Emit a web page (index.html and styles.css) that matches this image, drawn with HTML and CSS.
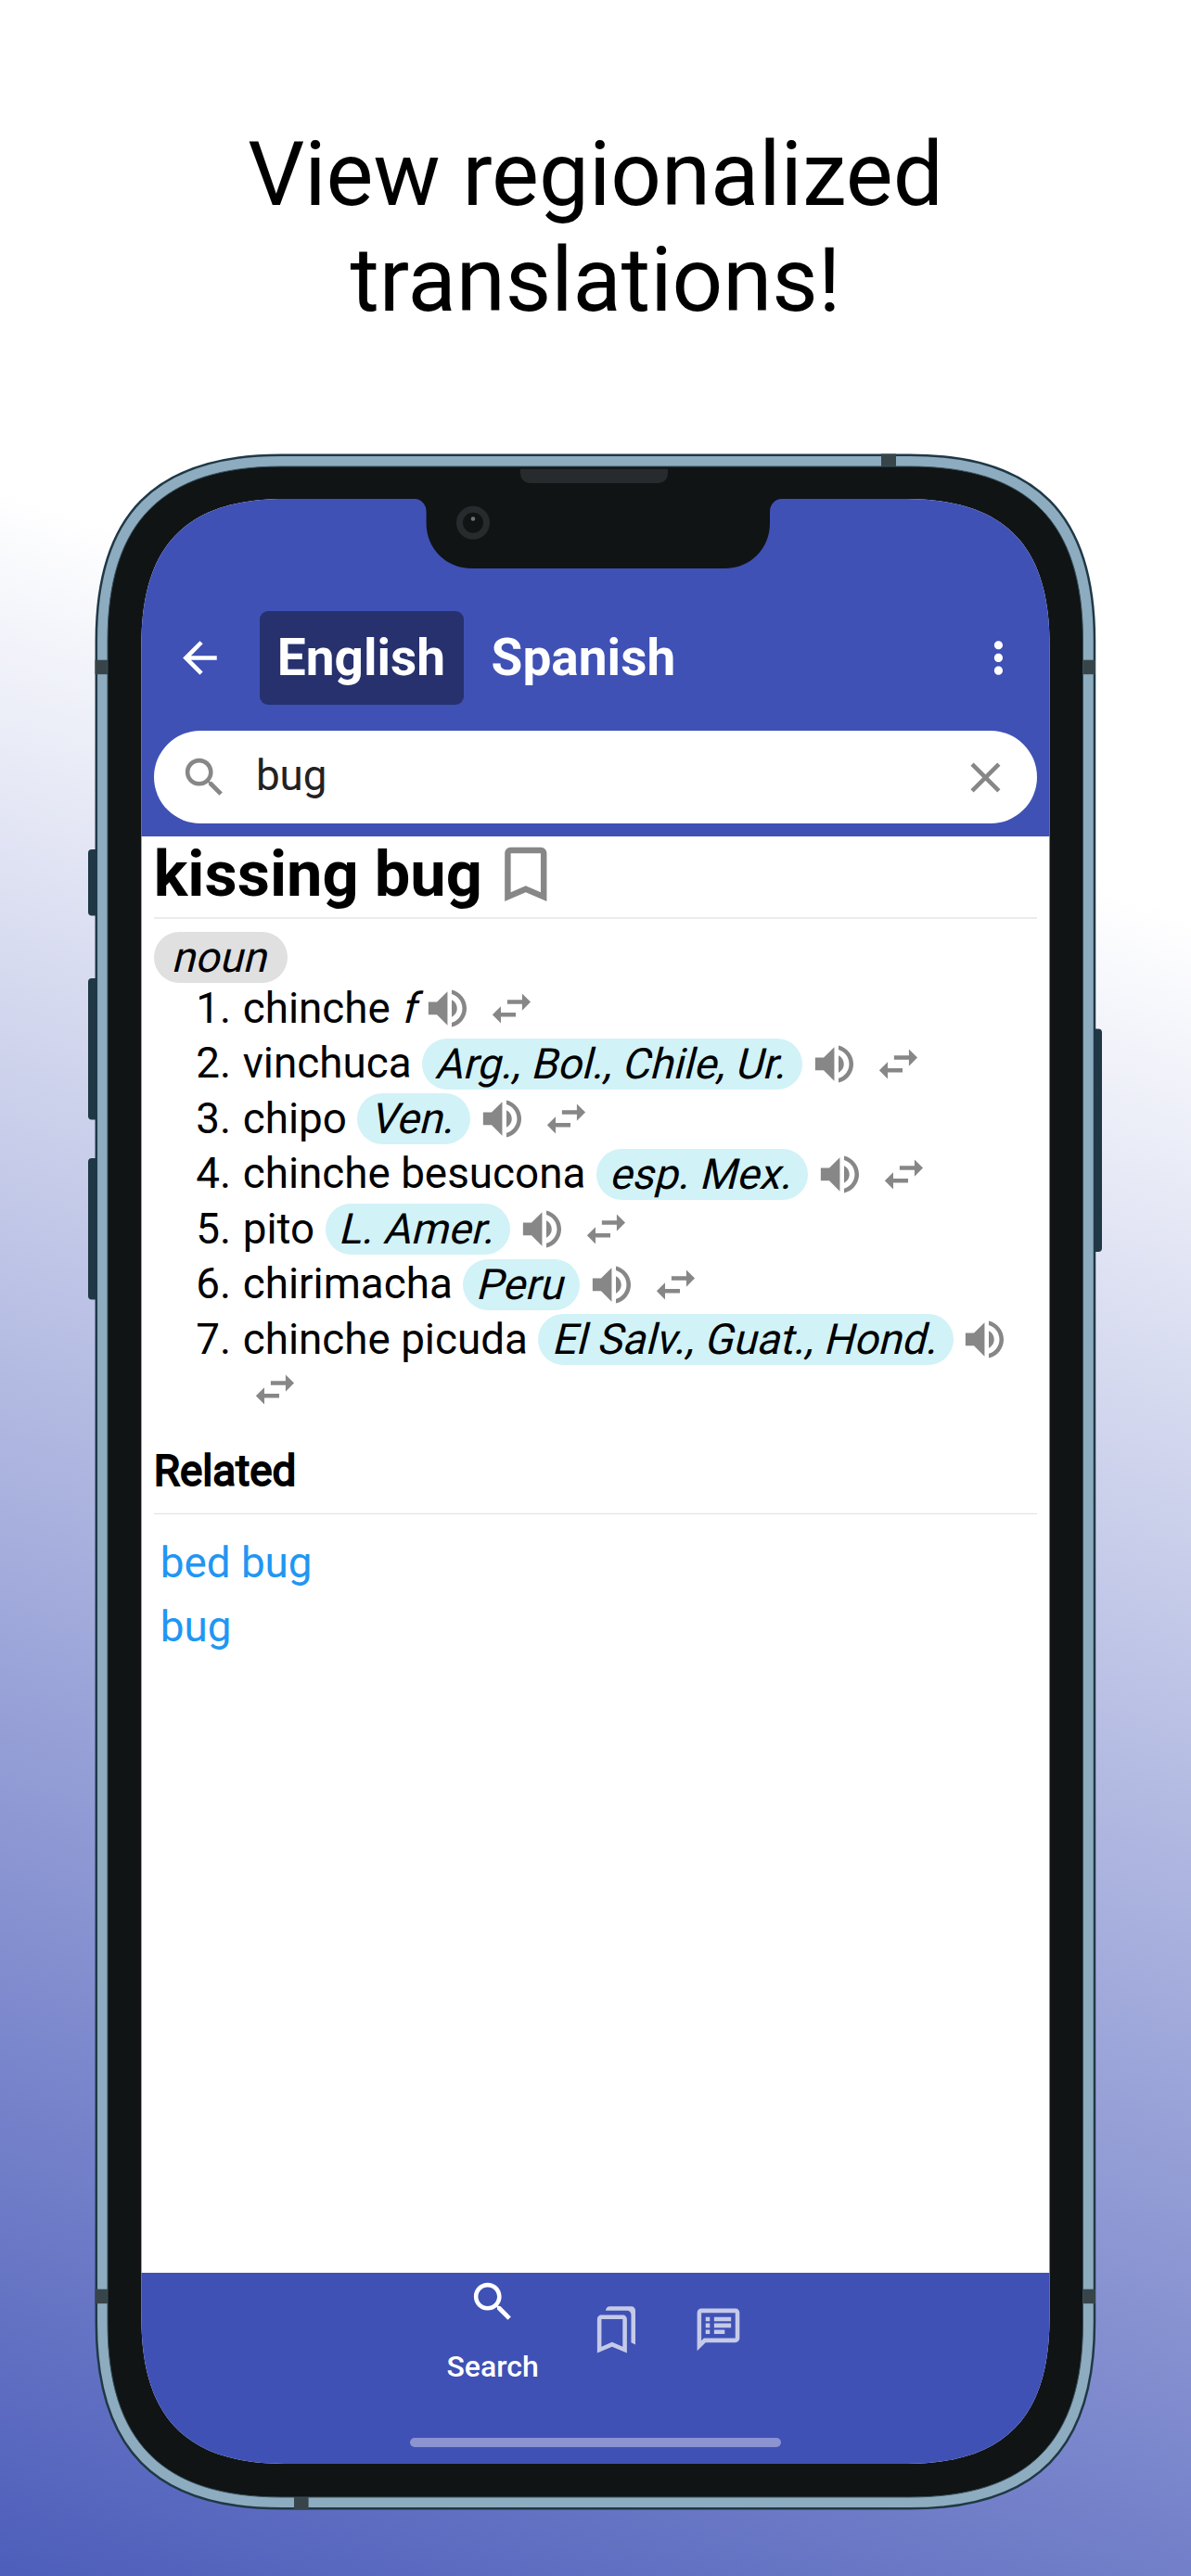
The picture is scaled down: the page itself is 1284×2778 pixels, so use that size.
FILE: index.html
```html
<!DOCTYPE html>
<html lang="en">
<head>
<meta charset="utf-8">
<title>Dictionary</title>
<link rel="stylesheet" href="styles.css">
</head>
<body>
<svg class="defs" width="0" height="0" aria-hidden="true">
  <symbol id="volume" viewBox="0 0 24 24"><path d="M3 9v6h4l5 5V4L7 9H3zm13.500 3c0-1.770-1.020-3.290-2.500-4.030v8.050c1.480-.73 2.500-2.250 2.500-4.020zM14 3.230v2.060c2.890.86 5 3.540 5 6.710s-2.110 5.850-5 6.710v2.060c4.010-.91 7-4.490 7-8.770s-2.990-7.860-7-8.770z"/></symbol>
  <symbol id="swap" viewBox="0 0 24 24"><path d="M6.990 11L3 15l3.990 4v-3H14v-2H6.990v-3zM21 9l-3.990-4v3H10v2h7.010v3L21 9z"/></symbol>
  <symbol id="search" viewBox="0 0 24 24"><path d="M15.500 14h-.79l-.28-.27C15.410 12.590 16 11.110 16 9.500 16 5.910 13.090 3 9.500 3S3 5.910 3 9.500 5.910 16 9.500 16c1.610 0 3.090-.59 4.230-1.570l.27.28v.79l5 4.990L20.490 19l-4.990-5zm-6 0C7.010 14 5 11.990 5 9.500S7.010 5 9.500 5 14 7.010 14 9.500 11.990 14 9.500 14z"/></symbol>
</svg>
<main class="page">
  <h1 class="headline">View regionalized<br>translations!</h1>
  <div class="phone">
    <svg class="frame" viewBox="95 480 1094 2236" aria-hidden="true">
      <g fill="#203845">
        <rect x="95" y="916" width="14" height="71.500" rx="4"/>
        <rect x="95" y="1055" width="14" height="152.500" rx="4"/>
        <rect x="95" y="1249" width="14" height="152.500" rx="4"/>
        <rect x="1174" y="1109.500" width="14" height="240.500" rx="4"/>
      </g>
      <path fill="#8eacc0" stroke="#203845" stroke-width="2.500" d="M303.500 490.700H980.500C1118 490.700 1180 556 1180 691V2505C1180 2640 1118 2705.300 980.500 2705.300H303.500C166 2705.300 103.800 2640 103.800 2505V691C103.800 556 166 490.700 303.500 490.700Z"/>
      <g fill="#37454b">
        <rect x="102.500" y="711.700" width="14" height="15.500"/>
        <rect x="1167" y="711.700" width="14" height="15.500"/>
        <rect x="102.500" y="2468.700" width="14" height="15.500"/>
        <rect x="1167" y="2468.700" width="14" height="15.500"/>
        <rect x="950" y="489.500" width="16" height="14"/>
        <rect x="317" y="2693" width="15.600" height="13.500"/>
      </g>
      <path fill="#101415" stroke="#37505c" stroke-width="1" d="M303.500 503H980.500C1109 503 1167.500 563 1167.500 691V2505C1167.500 2633 1109 2693 980.500 2693H303.500C175 2693 116 2633 116 2505V691C116 563 175 503 303.500 503Z"/>
      <path fill="#272b2d" d="M561 505.700H720V511a10 10 0 0 1-10 10H571a10 10 0 0 1-10-10Z"/>
    </svg>
    <div class="screen">
      <header class="appbar">
        <div class="toolbar">
          <svg class="icon back" viewBox="0 0 24 24"><path d="M20 11H7.830l5.590-5.590L12 4l-8 8 8 8 1.410-1.410L7.830 13H20v-2z"/></svg>
          <div class="tab active">English</div>
          <div class="tab">Spanish</div>
          <svg class="icon more" viewBox="0 0 24 24"><path d="M12 8c1.100 0 2-.9 2-2s-.9-2-2-2-2 .9-2 2 .9 2 2 2zm0 2c-1.100 0-2 .9-2 2s.9 2 2 2 2-.9 2-2-.9-2-2-2zm0 6c-1.100 0-2 .9-2 2s.9 2 2 2 2-.9 2-2-.9-2-2-2z"/></svg>
        </div>
        <div class="searchbox">
          <svg class="icon"><use href="#search"/></svg>
          <span class="query">bug</span>
          <svg class="icon" viewBox="0 0 24 24"><path d="M19 6.410L17.590 5 12 10.590 6.410 5 5 6.410 10.590 12 5 17.590 6.410 19 12 13.410 17.590 19 19 17.590 13.410 12z"/></svg>
        </div>
      </header>
      <section class="content">
        <div class="title">
          <h2>kissing bug</h2>
          <svg class="bookmark" viewBox="0 0 24 24"><path d="M17 3H7c-1.100 0-1.990.9-1.990 2L5 21l7-3 7 3V5c0-1.100-.9-2-2-2zm0 15l-5-2.180L7 18V5h10v13z"/></svg>
        </div>
        <div class="pos"><span class="pill grey"><span class="slant">noun</span></span></div>
        <ol class="senses">
          <li><span class="num">1.</span><span class="word">chinche <span class="slant gender">f</span></span><svg class="icon first"><use href="#volume"/></svg><svg class="icon swap"><use href="#swap"/></svg></li>
          <li><span class="num">2.</span><span class="word">vinchuca</span><span class="pill"><span class="slant">Arg., Bol., Chile, Ur.</span></span><svg class="icon"><use href="#volume"/></svg><svg class="icon swap"><use href="#swap"/></svg></li>
          <li><span class="num">3.</span><span class="word">chipo</span><span class="pill"><span class="slant">Ven.</span></span><svg class="icon"><use href="#volume"/></svg><svg class="icon swap"><use href="#swap"/></svg></li>
          <li><span class="num">4.</span><span class="word">chinche besucona</span><span class="pill"><span class="slant">esp. Mex.</span></span><svg class="icon"><use href="#volume"/></svg><svg class="icon swap"><use href="#swap"/></svg></li>
          <li><span class="num">5.</span><span class="word">pito</span><span class="pill"><span class="slant">L. Amer.</span></span><svg class="icon"><use href="#volume"/></svg><svg class="icon swap"><use href="#swap"/></svg></li>
          <li><span class="num">6.</span><span class="word">chirimacha</span><span class="pill"><span class="slant">Peru</span></span><svg class="icon"><use href="#volume"/></svg><svg class="icon swap"><use href="#swap"/></svg></li>
          <li><span class="num">7.</span><span class="word">chinche picuda</span><span class="pill"><span class="slant">El Salv., Guat., Hond.</span></span><svg class="icon"><use href="#volume"/></svg></li>
          <li class="wrapped"><svg class="icon"><use href="#swap"/></svg></li>
        </ol>
        <h3 class="related">Related</h3>
        <div class="links"><a>bed bug</a><a>bug</a></div>
      </section>
      <nav class="bottom">
        <div class="items">
          <div class="item selected"><svg class="icon"><use href="#search"/></svg><span>Search</span></div>
          <div class="item"><svg class="icon" viewBox="0 0 24 24"><path d="M15 7v12.970l-4.210-1.810-.79-.34-.79.34L5 19.970V7h10m4-6H8.990C7.890 1 7 1.900 7 3h10c1.100 0 2 .9 2 2v13l2 1V3c0-1.100-.9-2-2-2zm-4 4H5c-1.100 0-2 .9-2 2v16l7-3 7 3V7c0-1.100-.9-2-2-2z"/></svg></div>
          <div class="item"><svg class="icon" viewBox="0 0 24 24"><path d="M20 2H4c-1.100 0-1.990.9-1.990 2L2 22l4-4h14c1.100 0 2-.9 2-2V4c0-1.100-.9-2-2-2zm0 14H5.170L4 17.170V4h16v12zM6 12h2v2H6zm0-3h2v2H6zm0-3h2v2H6zm4 6h5v2h-5zm0-3h8v2h-8zm0-3h8v2h-8z"/></svg></div>
        </div>
        <div class="homebar"></div>
      </nav>
    </div>
    <svg class="notch" viewBox="440 536 410 80" aria-hidden="true">
      <path fill="#101415" d="M440 536V538H447A12.600 14 0 0 1 459.600 552V564C459.600 592 481 613 509 613H781C809 613 830 592 830 564V552A12.600 14 0 0 1 842.600 538H850V536Z"/>
      <circle cx="510" cy="563.700" r="14.500" fill="none" stroke="#272b2d" stroke-width="7"/>
      <circle cx="510" cy="559.500" r="2.300" fill="#6b7478"/>
    </svg>
  </div>
</main>
</body>
</html>
```
FILE: styles.css
```css
* { box-sizing: border-box; }
body { margin: 0; font-family: Roboto, sans-serif; color: #000; }
h1, h2, h3, ol { margin: 0; padding: 0; font-weight: inherit; }
svg { display: block; flex: none; }
.defs { position: absolute; }

.page {
  width: 1284px; height: 2778px; overflow: hidden;
  background: linear-gradient(200deg, #fff 30.500%, #3f51b5 105.400%);
}
.headline {
  height: 480px; padding-top: 131px;
  text-align: center; font-size: 96px; line-height: 114px; font-weight: 400;
}

/* Device */
.phone { position: relative; width: 1094px; height: 2236px; margin-left: 95px; padding: 58px 57px 0; }
.frame { position: absolute; left: 0; top: 0; width: 1094px; height: 2236px; }
.notch { position: absolute; left: 345px; top: 56px; width: 410px; height: 80px; }
.screen {
  position: relative; width: 980px; height: 2119px; background: #fff;
  display: flex; flex-direction: column;
  clip-path: path("M155 0H825C932 0 979.5 51 979.5 157V1962C979.5 2068 932 2119 825 2119H155C48 2119 0.4 2068 0.4 1962V157C0.4 51 48 0 155 0Z");
}
.icon { width: 54.900px; height: 54.900px; fill: currentColor; }

/* App bar */
.appbar { height: 364px; background: #3f51b5; padding: 121px 14px 0; color: #fff; }
.toolbar { display: flex; align-items: center; height: 101px; padding: 0 14.500px 0 22px; }
.tab { height: 101px; line-height: 101px; width: 220px; padding-right: 1px; text-align: center; font-size: 55px; font-weight: 700; border-radius: 9px; }
.back { margin-right: 37px; }
.tab.active { background: #27316e; }
.tab + .tab { width: 238px; margin-left: 10px; padding: 0; }
.more { margin-left: auto; }
.searchbox {
  margin-top: 27.500px; height: 100.500px; border-radius: 51px; background: #fff; color: #878787;
  display: flex; align-items: center; padding: 2px 28px 0 27px;
}
.query { flex: 1; margin: -5px 0 0 28px; font-size: 45.800px; color: #222; }

/* Entry */
.content { flex: 1; padding: 0 14px 0 13.700px; font-size: 45.800px; line-height: 54px; }
.title { display: flex; align-items: center; height: 88.500px; border-bottom: 2px solid #ececec; padding-bottom: 4px; }
.title h2 { font-size: 68.600px; font-weight: 700; line-height: 80px; }
.bookmark { width: 77.600px; height: 77.600px; fill: #878787; margin-left: 8px; }
.pos { display: flex; padding-top: 14.500px; }
.pill { height: 55px; line-height: 55px; padding: 0 16.200px; border-radius: 27.500px; background: #d1f2f7; white-space: nowrap; margin: 0 6.900px 0 11.400px; }
.pill.grey { background: #e0e0e0; margin: 0; padding: 0 21px; }
.slant { display: inline-block; transform: skewX(-14deg); transform-origin: 50% 60%; }
.gender { transform-origin: 50% 77%; }
.senses { list-style: none; margin-top: -2px; }
.senses li { display: flex; align-items: center; height: 59.500px; white-space: pre; }
.senses .icon { color: #878787; }
.num { width: 83.500px; text-align: right; margin-right: 12.500px; }
.senses .first { margin-left: 6.900px; }
.senses .swap { margin-left: 13.700px; }
.senses .wrapped { height: 54px; padding-left: 103px; margin-top: -3px; }
.related { margin-top: 34px; height: 73px; border-bottom: 1px solid #e0e0e0; font-size: 45.800px; -webkit-text-stroke: 1.900px #000; }
.links { display: flex; flex-direction: column; padding: 18px 7px; line-height: 69px; color: #2196f3; }

/* Bottom navigation */
.bottom { height: 206px; background: #3f51b5; display: flex; flex-direction: column; align-items: center; color: #fff; }
.items { display: flex; height: 178px; gap: 55.300px; margin-right: 1.500px; }
.item { height: 122px; display: flex; flex-direction: column; align-items: center; justify-content: center; color: #c5cae9; }
.item.selected { width: 101px; color: #fff; justify-content: flex-start; padding-top: 4px; }
.item span { font-size: 32px; line-height: 36px; font-weight: 500; margin-top: 24px; }
.homebar { width: 400px; height: 10px; border-radius: 5px; background: #8b93d0; }
```
